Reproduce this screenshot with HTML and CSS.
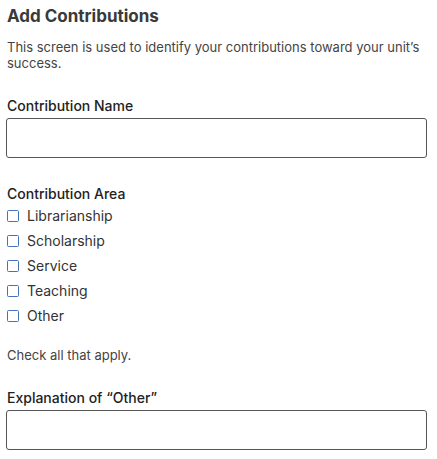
FILE: index.html
```html
<!DOCTYPE html>
<html lang="en">
<head>
<meta charset="utf-8">
<title>Add Contributions</title>
<link rel="stylesheet" href="styles.css">
</head>
<body>
<main class="page">
  <h1 class="title">Add Contributions</h1>
  <p class="intro">This screen is used to identify your contributions toward your unit’s success.</p>

  <div class="field field-name">
    <label class="label" for="cname">Contribution Name</label>
    <input class="text-input" id="cname" type="text">
  </div>

  <fieldset class="field field-area">
    <legend class="label">Contribution Area</legend>
    <ul class="checks">
      <li class="check"><span class="box"></span><span>Librarianship</span></li>
      <li class="check"><span class="box"></span><span>Scholarship</span></li>
      <li class="check"><span class="box"></span><span>Service</span></li>
      <li class="check"><span class="box"></span><span>Teaching</span></li>
      <li class="check"><span class="box"></span><span>Other</span></li>
    </ul>
    <p class="hint">Check all that apply.</p>
  </fieldset>

  <div class="field field-other">
    <label class="label" for="other">Explanation of “Other”</label>
    <input class="text-input" id="other" type="text">
  </div>
</main>
</body>
</html>
```
FILE: styles.css
```css
* { box-sizing: border-box; }
html, body { margin: 0; padding: 0; background: #fff; }
body {
  font-family: Inter, "Noto Sans", sans-serif;
  color: #333;
}
.page {
  padding: 6px 10px 0 6px;
  display: flex;
  flex-direction: column;
}
.title {
  margin: 0 0 0 1px;
  font-size: 17px;
  line-height: 20px;
  font-weight: 700;
  color: #3a3a3a;
}
.intro {
  margin: 13px 0 0 1px;
  font-size: 13px;
  line-height: 16px;
  color: #444;
}
.field {
  display: flex;
  flex-direction: column;
  border: 0;
  padding: 0;
  margin: 0;
  min-width: 0;
}
.field-name { margin-top: 26px; }
.field-area { margin-top: 27px; }
.field-other { margin-top: 26px; }
.label {
  display: block;
  padding: 0;
  margin-left: 1px;
  font-size: 14px;
  line-height: 18px;
  font-weight: 500;
  color: #222;
}
.text-input {
  margin-top: 3px;
  width: 421px;
  height: 40px;
  border: 1px solid #555;
  border-radius: 3px;
  background: #fff;
  font: inherit;
}
.checks {
  list-style: none;
  margin: 0;
  padding: 0;
  display: flex;
  flex-direction: column;
}
.check {
  height: 25px;
  display: flex;
  align-items: center;
  gap: 8px;
  padding-left: 1px;
  font-size: 14px;
  color: #333;
}
.box {
  width: 12px;
  height: 12px;
  border: 1.5px solid #4472b8;
  border-radius: 1.5px;
  flex: none;
}
.hint {
  margin: 19px 0 0 1px;
  font-size: 13px;
  line-height: 16px;
  color: #444;
}
```
